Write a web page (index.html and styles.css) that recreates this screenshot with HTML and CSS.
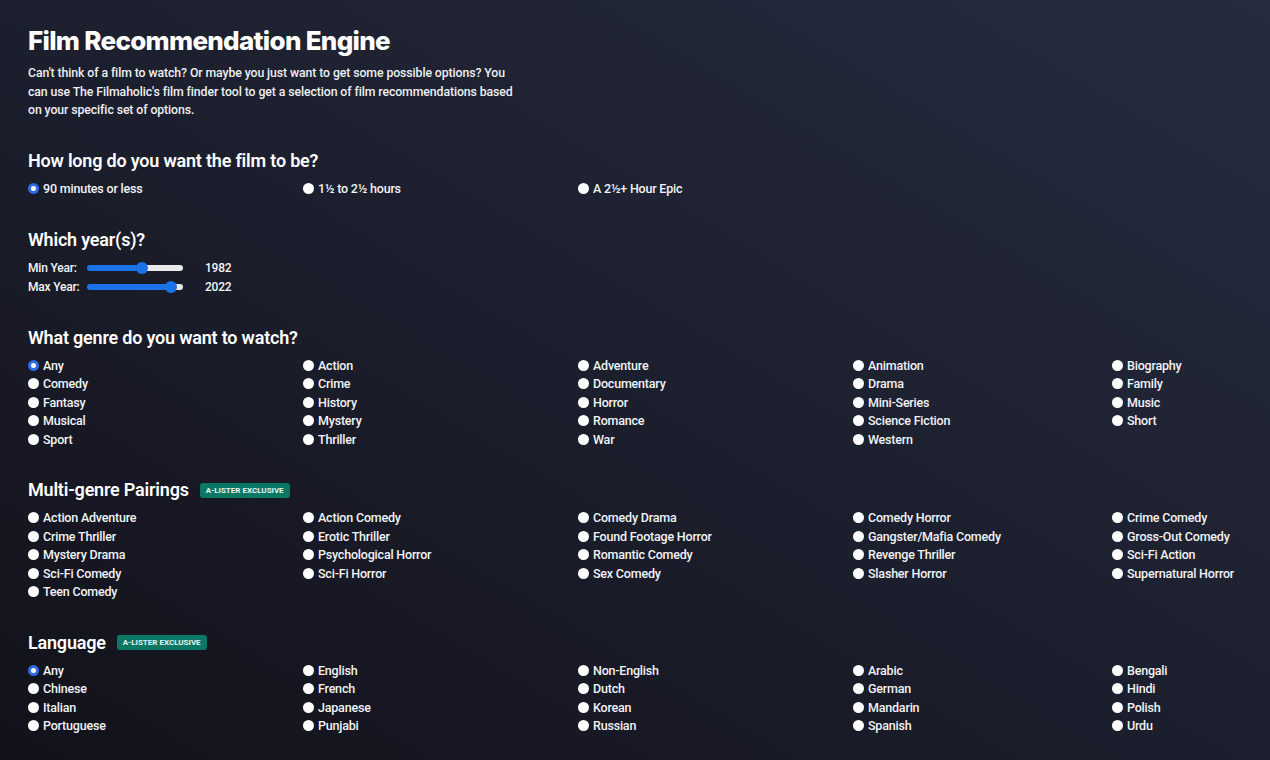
FILE: index.html
```html
<!DOCTYPE html>
<html>
<head>
  <title>Film Recommendation Engine</title>
  <link rel="stylesheet" href="styles.css">
</head>

<body>
  <div class="main">
    <h1 class="maintitle">Film Recommendation Engine</h1>
    <p class="intro">Can't think of a film to watch? Or maybe you just want to get some possible options? You can use The Filmaholic's film finder tool to get a selection of film recommendations based on your specific set of options.</p>

    <div class="section">
      <h2 class="heading">How long do you want the film to be?</h2>
      <div class="options">
        <label class="option"><input type="radio" name="length" checked><span>90 minutes or less</span></label>
        <label class="option"><input type="radio" name="length"><span>1½ to 2½ hours</span></label>
        <label class="option"><input type="radio" name="length"><span>A 2½+ Hour Epic</span></label>
      </div>
    </div>

    <div class="section">
      <h2 class="heading">Which year(s)?</h2>
      <div class="sliders">
        <div class="sliderRow">
          <span class="sliderLabel">Min Year:</span>
          <input type="range" class="slider" min="1914" max="2030" value="1982" style="background: linear-gradient(to right, #1a73e8 55%, #e8e8e8 55%);">
          <span class="sliderValue">1982</span>
        </div>
        <div class="sliderRow">
          <span class="sliderLabel">Max Year:</span>
          <input type="range" class="slider" min="1914" max="2030" value="2022" style="background: linear-gradient(to right, #1a73e8 88%, #e8e8e8 88%);">
          <span class="sliderValue">2022</span>
        </div>
      </div>
    </div>

    <div class="section">
      <h2 class="heading">What genre do you want to watch?</h2>
      <div class="options">
        <label class="option"><input type="radio" name="genre" checked><span>Any</span></label>
        <label class="option"><input type="radio" name="genre"><span>Action</span></label>
        <label class="option"><input type="radio" name="genre"><span>Adventure</span></label>
        <label class="option"><input type="radio" name="genre"><span>Animation</span></label>
        <label class="option"><input type="radio" name="genre"><span>Biography</span></label>
        <label class="option"><input type="radio" name="genre"><span>Comedy</span></label>
        <label class="option"><input type="radio" name="genre"><span>Crime</span></label>
        <label class="option"><input type="radio" name="genre"><span>Documentary</span></label>
        <label class="option"><input type="radio" name="genre"><span>Drama</span></label>
        <label class="option"><input type="radio" name="genre"><span>Family</span></label>
        <label class="option"><input type="radio" name="genre"><span>Fantasy</span></label>
        <label class="option"><input type="radio" name="genre"><span>History</span></label>
        <label class="option"><input type="radio" name="genre"><span>Horror</span></label>
        <label class="option"><input type="radio" name="genre"><span>Mini-Series</span></label>
        <label class="option"><input type="radio" name="genre"><span>Music</span></label>
        <label class="option"><input type="radio" name="genre"><span>Musical</span></label>
        <label class="option"><input type="radio" name="genre"><span>Mystery</span></label>
        <label class="option"><input type="radio" name="genre"><span>Romance</span></label>
        <label class="option"><input type="radio" name="genre"><span>Science Fiction</span></label>
        <label class="option"><input type="radio" name="genre"><span>Short</span></label>
        <label class="option"><input type="radio" name="genre"><span>Sport</span></label>
        <label class="option"><input type="radio" name="genre"><span>Thriller</span></label>
        <label class="option"><input type="radio" name="genre"><span>War</span></label>
        <label class="option"><input type="radio" name="genre"><span>Western</span></label>
      </div>
    </div>

    <div class="section">
      <h2 class="heading">Multi-genre Pairings <span class="badge">A-LISTER EXCLUSIVE</span></h2>
      <div class="options">
        <label class="option"><input type="radio" name="pair"><span>Action Adventure</span></label>
        <label class="option"><input type="radio" name="pair"><span>Action Comedy</span></label>
        <label class="option"><input type="radio" name="pair"><span>Comedy Drama</span></label>
        <label class="option"><input type="radio" name="pair"><span>Comedy Horror</span></label>
        <label class="option"><input type="radio" name="pair"><span>Crime Comedy</span></label>
        <label class="option"><input type="radio" name="pair"><span>Crime Thriller</span></label>
        <label class="option"><input type="radio" name="pair"><span>Erotic Thriller</span></label>
        <label class="option"><input type="radio" name="pair"><span>Found Footage Horror</span></label>
        <label class="option"><input type="radio" name="pair"><span>Gangster/Mafia Comedy</span></label>
        <label class="option"><input type="radio" name="pair"><span>Gross-Out Comedy</span></label>
        <label class="option"><input type="radio" name="pair"><span>Mystery Drama</span></label>
        <label class="option"><input type="radio" name="pair"><span>Psychological Horror</span></label>
        <label class="option"><input type="radio" name="pair"><span>Romantic Comedy</span></label>
        <label class="option"><input type="radio" name="pair"><span>Revenge Thriller</span></label>
        <label class="option"><input type="radio" name="pair"><span>Sci-Fi Action</span></label>
        <label class="option"><input type="radio" name="pair"><span>Sci-Fi Comedy</span></label>
        <label class="option"><input type="radio" name="pair"><span>Sci-Fi Horror</span></label>
        <label class="option"><input type="radio" name="pair"><span>Sex Comedy</span></label>
        <label class="option"><input type="radio" name="pair"><span>Slasher Horror</span></label>
        <label class="option"><input type="radio" name="pair"><span>Supernatural Horror</span></label>
        <label class="option"><input type="radio" name="pair"><span>Teen Comedy</span></label>
      </div>
    </div>

    <div class="section">
      <h2 class="heading">Language <span class="badge">A-LISTER EXCLUSIVE</span></h2>
      <div class="options">
        <label class="option"><input type="radio" name="lang" checked><span>Any</span></label>
        <label class="option"><input type="radio" name="lang"><span>English</span></label>
        <label class="option"><input type="radio" name="lang"><span>Non-English</span></label>
        <label class="option"><input type="radio" name="lang"><span>Arabic</span></label>
        <label class="option"><input type="radio" name="lang"><span>Bengali</span></label>
        <label class="option"><input type="radio" name="lang"><span>Chinese</span></label>
        <label class="option"><input type="radio" name="lang"><span>French</span></label>
        <label class="option"><input type="radio" name="lang"><span>Dutch</span></label>
        <label class="option"><input type="radio" name="lang"><span>German</span></label>
        <label class="option"><input type="radio" name="lang"><span>Hindi</span></label>
        <label class="option"><input type="radio" name="lang"><span>Italian</span></label>
        <label class="option"><input type="radio" name="lang"><span>Japanese</span></label>
        <label class="option"><input type="radio" name="lang"><span>Korean</span></label>
        <label class="option"><input type="radio" name="lang"><span>Mandarin</span></label>
        <label class="option"><input type="radio" name="lang"><span>Polish</span></label>
        <label class="option"><input type="radio" name="lang"><span>Portuguese</span></label>
        <label class="option"><input type="radio" name="lang"><span>Punjabi</span></label>
        <label class="option"><input type="radio" name="lang"><span>Russian</span></label>
        <label class="option"><input type="radio" name="lang"><span>Spanish</span></label>
        <label class="option"><input type="radio" name="lang"><span>Urdu</span></label>
      </div>
    </div>
  </div>
</body>
</html>
```

FILE: styles.css
```css
html {background: #181a26;}
body {margin: 0; min-height: 760px; font-family: Roboto, 'Liberation Sans', sans-serif; color: #f4f4f6; background: linear-gradient(to bottom left, #262c40 0%, #1c1f2d 50%, #12121b 100%);}
.main {padding: 25px 28px 0 28px;}
.maintitle {margin: 0; font-family: Inter, Roboto, sans-serif; font-weight: 800; font-size: 26px; line-height: 32px; letter-spacing: -0.7px; color: #fff;}
.intro {margin: 7px 0 0 0; width: 492px; font-size: 12.3px; line-height: 18.5px; font-weight: 500; letter-spacing: -0.1px; color: #eef0f4;}
.section {margin-top: 30.5px;}
.heading {display: flex; align-items: center; margin: 0 0 7.5px 0; font-size: 18px; line-height: 22px; font-weight: 600; letter-spacing: -0.2px; color: #fff;}
.badge {margin-left: 11px; padding: 0 6px; height: 15px; line-height: 15px; border-radius: 3px; background: #0b7866; color: #e8f3f0; font-size: 8px; font-weight: 700; letter-spacing: 0;}
.options {display: grid; grid-template-columns: 275px 275px 275px 259px auto;}
.option {display: flex; align-items: center; height: 18.5px; font-size: 12.5px; font-weight: 500; letter-spacing: -0.2px; color: #f2f3f6;}
.option input {appearance: none; -webkit-appearance: none; margin: 0 4px 0 0; width: 11px; height: 11px; border-radius: 50%; background: #fff; flex-shrink: 0;}
.option input:checked {background: #fff; border: 3.5px solid #2d6ae3;}
.sliderRow {display: flex; align-items: center; height: 19px; font-size: 12px; font-weight: 500; letter-spacing: -0.2px;}
.sliderLabel {width: 59px;}
.slider {appearance: none; -webkit-appearance: none; margin: 0; width: 96px; height: 6px; border-radius: 3px;}
.slider::-webkit-slider-thumb {-webkit-appearance: none; width: 12px; height: 12px; border-radius: 50%; background: #1a73e8;}
.sliderValue {margin-left: 22px;}
```
